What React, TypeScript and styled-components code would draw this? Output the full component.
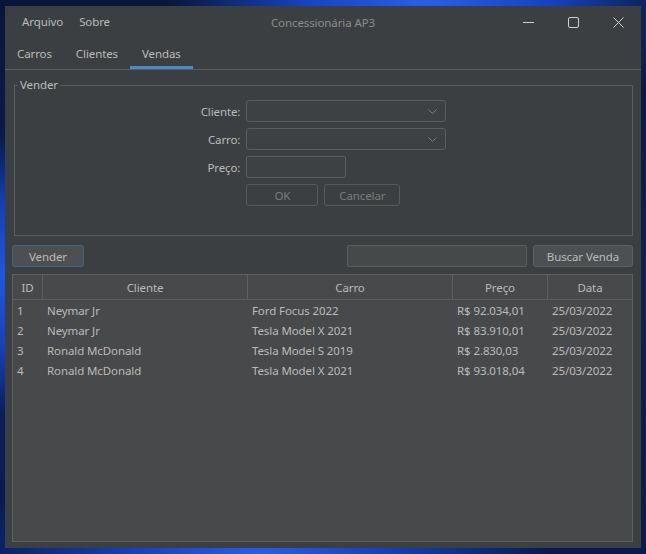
import React from "react";
import styled, { createGlobalStyle } from "styled-components";

const GlobalStyle = createGlobalStyle`
  html, body { margin: 0; padding: 0; }
  body {
    width: 646px;
    height: 554px;
    overflow: hidden;
    font-family: "Noto Sans", "Open Sans", sans-serif;
    font-size: 11.5px;
    letter-spacing: -0.1px;
    background:
      radial-gradient(ellipse 40% 30% at 66% 0%, #2a5fe6 0%, #1744c4 45%, rgba(10,30,100,0) 100%),
      radial-gradient(ellipse 30% 25% at 0% 50%, #2256e0 0%, #1840b8 50%, rgba(10,30,100,0) 100%),
      radial-gradient(ellipse 45% 20% at 40% 100%, #2a5ee8 0%, #143cb0 50%, rgba(10,30,100,0) 100%),
      linear-gradient(180deg, #0a1638 0%, #0c1f5c 50%, #0a1a4c 100%);
  }
  #root { padding: 6px 5px; }
`;

const Window = styled.div`
  width: 636px;
  height: 542px;
  background: #3c3f41;
  color: #bbbbbb;
  display: flex;
  flex-direction: column;
  box-sizing: border-box;
`;

const TitleBar = styled.div`
  height: 32px;
  display: flex;
  align-items: center;
  padding-left: 9px;
`;

const Menu = styled.div`
  display: flex;
  align-items: center;
`;

const MenuItem = styled.span`
  padding: 0 8px;
  color: #bbbbbb;
  line-height: 32px;
`;

const Title = styled.div`
  flex: 1;
  text-align: center;
  color: #8c8c8c;
  margin-left: -56px;
  margin-right: -78px;
`;

const Controls = styled.div`
  display: flex;
  height: 32px;
`;

const Ctrl = styled.div`
  width: 45px;
  height: 32px;
  display: flex;
  align-items: center;
  justify-content: center;
`;

const TabStrip = styled.div`
  height: 31px;
  display: flex;
  border-bottom: 1px solid #5a5d5f;
`;

const Tab = styled.div<{ $active?: boolean }>`
  padding: 0 12px;
  display: flex;
  align-items: center;
  color: #bbbbbb;
  box-shadow: ${(p) => (p.$active ? "inset 0 -3px 0 #4a88c7" : "none")};
`;

const Content = styled.div`
  flex: 1;
  display: flex;
  flex-direction: column;
  padding: 0 8px 6px 7px;
  min-height: 0;
`;

const Group = styled.fieldset`
  margin: 7px 0 0 2px;
  padding: 0 0 29px 0;
  border: 1px solid #5a5d5f;
  border-radius: 0;
  min-width: 0;
`;

const Legend = styled.legend`
  margin-left: 3px;
  padding: 0 2px;
  line-height: 16px;
  color: #bbbbbb;
`;

const FormGrid = styled.div`
  margin-top: 7px;
  display: grid;
  grid-template-columns: auto auto;
  grid-auto-rows: 22px;
  column-gap: 6px;
  row-gap: 6px;
  justify-content: center;
  align-items: center;
`;

const Label = styled.label`
  text-align: right;
  color: #bbbbbb;
`;

const Combo = styled.div`
  width: 200px;
  height: 22px;
  box-sizing: border-box;
  border: 1px solid #5a5d5f;
  border-radius: 3px;
  background: #3e4143;
  display: flex;
  align-items: center;
  justify-content: flex-end;
  padding-right: 8px;
`;

const Field = styled.div<{ $w: number }>`
  width: ${(p) => p.$w}px;
  height: 22px;
  box-sizing: border-box;
  border: 1px solid #5a5d5f;
  border-radius: 2px;
  background: #3e4143;
`;

const ButtonRow = styled.div`
  display: flex;
  gap: 6px;
`;

const Button = styled.button<{ $w: number; $variant?: "disabled" | "focus" | "normal" }>`
  width: ${(p) => p.$w}px;
  height: 22px;
  box-sizing: border-box;
  font-family: inherit;
  font-size: inherit;
  letter-spacing: inherit;
  padding: 0;
  border-radius: 3px;
  border: 1px solid
    ${(p) => (p.$variant === "focus" ? "#3f6489" : p.$variant === "disabled" ? "#565a5c" : "#5e6162")};
  background: ${(p) => (p.$variant === "disabled" ? "#3c3f41" : "#4c5052")};
  color: ${(p) => (p.$variant === "disabled" ? "#7b7b7b" : "#bbbbbb")};
`;

const Toolbar = styled.div`
  margin-top: 9px;
  display: flex;
  align-items: center;
  height: 22px;
`;

const Spacer = styled.div`
  flex: 1;
`;

const SearchBox = styled.div`
  width: 180px;
  height: 22px;
  box-sizing: border-box;
  border: 1px solid #5a5d5f;
  border-radius: 2px;
  background: #45494a;
  margin-right: 6px;
`;

const TableBox = styled.div`
  margin-top: 7px;
  flex: 1;
  border: 1px solid #5e6060;
  background: #48494a;
  display: flex;
  flex-direction: column;
`;

const cols = "30px 205px 205px 95px 1fr";

const HeaderRow = styled.div`
  display: grid;
  grid-template-columns: ${cols};
  height: 25px;
  border-bottom: 1px solid #5e6060;
  box-sizing: border-box;
`;

const HeadCell = styled.div<{ $last?: boolean }>`
  display: flex;
  align-items: center;
  justify-content: center;
  border-right: ${(p) => (p.$last ? "none" : "1px solid #5e6060")};
  color: #bbbbbb;
`;

const Row = styled.div`
  display: grid;
  grid-template-columns: ${cols};
  height: 20px;
  align-items: center;
`;

const Cell = styled.div`
  padding-left: 4px;
  white-space: nowrap;
  overflow: hidden;
  color: #bbbbbb;
`;

const Chevron = () => (
  <svg width="9" height="5" viewBox="0 0 9 5">
    <path d="M0.5 0.5 L4.5 4.5 L8.5 0.5" fill="none" stroke="#7c7c7c" strokeWidth="1" />
  </svg>
);

const rows = [
  ["1", "Neymar Jr", "Ford Focus 2022", "R$ 92.034,01", "25/03/2022"],
  ["2", "Neymar Jr", "Tesla Model X 2021", "R$ 83.910,01", "25/03/2022"],
  ["3", "Ronald McDonald", "Tesla Model S 2019", "R$ 2.830,03", "25/03/2022"],
  ["4", "Ronald McDonald", "Tesla Model X 2021", "R$ 93.018,04", "25/03/2022"],
];

export default function App() {
  return (
    <>
      <GlobalStyle />
      <Window>
        <TitleBar>
          <Menu>
            <MenuItem>Arquivo</MenuItem>
            <MenuItem>Sobre</MenuItem>
          </Menu>
          <Title>Concessionária AP3</Title>
          <Controls>
            <Ctrl>
              <svg width="11" height="11" viewBox="0 0 11 11">
                <path d="M0 5.5 H11" stroke="#d0d0d0" strokeWidth="1" />
              </svg>
            </Ctrl>
            <Ctrl>
              <svg width="11" height="11" viewBox="0 0 11 11">
                <rect x="0.5" y="0.5" width="10" height="10" rx="1.5" fill="none" stroke="#d0d0d0" strokeWidth="1" />
              </svg>
            </Ctrl>
            <Ctrl>
              <svg width="11" height="11" viewBox="0 0 11 11">
                <path d="M0.5 0.5 L10.5 10.5 M10.5 0.5 L0.5 10.5" stroke="#d0d0d0" strokeWidth="1" />
              </svg>
            </Ctrl>
          </Controls>
        </TitleBar>
        <TabStrip>
          <Tab>Carros</Tab>
          <Tab>Clientes</Tab>
          <Tab $active>Vendas</Tab>
        </TabStrip>
        <Content>
          <Group>
            <Legend>Vender</Legend>
            <FormGrid>
              <Label>Cliente:</Label>
              <Combo><Chevron /></Combo>
              <Label>Carro:</Label>
              <Combo><Chevron /></Combo>
              <Label>Preço:</Label>
              <Field $w={100} />
              <span />
              <ButtonRow>
                <Button $w={72} $variant="disabled">OK</Button>
                <Button $w={76} $variant="disabled">Cancelar</Button>
              </ButtonRow>
            </FormGrid>
          </Group>
          <Toolbar>
            <Button $w={72} $variant="focus">Vender</Button>
            <Spacer />
            <SearchBox />
            <Button $w={100}>Buscar Venda</Button>
          </Toolbar>
          <TableBox>
            <HeaderRow>
              <HeadCell>ID</HeadCell>
              <HeadCell>Cliente</HeadCell>
              <HeadCell>Carro</HeadCell>
              <HeadCell>Preço</HeadCell>
              <HeadCell $last>Data</HeadCell>
            </HeaderRow>
            {rows.map((r) => (
              <Row key={r[0]}>
                {r.map((c, i) => (
                  <Cell key={i}>{c}</Cell>
                ))}
              </Row>
            ))}
          </TableBox>
        </Content>
      </Window>
    </>
  );
}
